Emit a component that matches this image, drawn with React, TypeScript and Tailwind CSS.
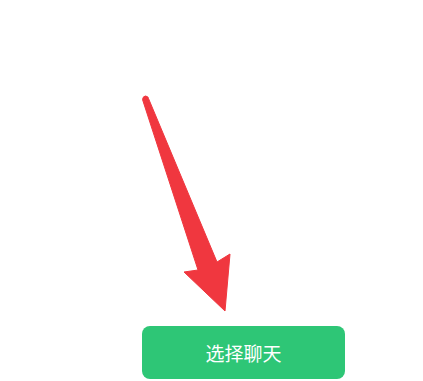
import React from "react";

export default function App() {
  return (
    <div className="w-[423px] h-[381px] bg-white overflow-hidden flex flex-col" style={{ fontFamily: '"Noto Sans CJK SC", "Noto Sans", sans-serif' }}>
      <svg width="423" height="326" viewBox="0 0 423 326" className="block shrink-0">
        <path
          d="M142.5 99.5 Q143 96 145.5 96 Q148.5 96.5 148.5 98.5 L217 262 L230 254 L225 311 L184 272 L198 270 Z"
          fill="#f0373f"
          stroke="#f0373f"
          strokeWidth="1"
          strokeLinejoin="round"
        />
      </svg>
      <div className="ml-[142px] w-[203px] h-[53px] rounded-[8px] bg-[#2ec676] flex items-center justify-center text-white text-[19px] leading-none">
        选择聊天
      </div>
    </div>
  );
}
